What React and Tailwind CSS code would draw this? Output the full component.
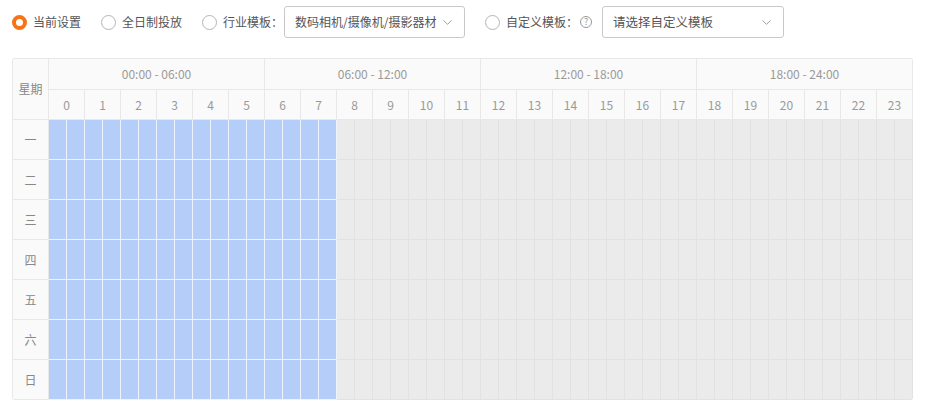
import React from 'react';
import { ChevronDown } from 'lucide-react';

const font = { fontFamily: '"Noto Sans CJK SC", "Noto Sans", sans-serif' };

const ranges = ['00:00 - 06:00', '06:00 - 12:00', '12:00 - 18:00', '18:00 - 24:00'];
const days = ['一', '二', '三', '四', '五', '六', '日'];
const hours = Array.from({ length: 24 }, (_, i) => i);
const halves = Array.from({ length: 48 }, (_, i) => i);

function Radio({ checked, label }) {
  return (
    <label className="flex items-center gap-[6px] text-[12px] text-[#555] whitespace-nowrap cursor-pointer">
      {checked ? (
        <span className="w-[15px] h-[15px] rounded-full border-[4px] border-[#f97316] bg-white" />
      ) : (
        <span className="w-[15px] h-[15px] rounded-full border border-[#b5b5b5] bg-white" />
      )}
      {label}
    </label>
  );
}

function Select({ value, width, size }) {
  return (
    <div
      className={`${width} ${size} h-[32px] shrink-0 border border-[#c9c9c9] rounded-[3px] flex items-center justify-between pl-[10px] pr-[9px] text-[#555] bg-white whitespace-nowrap`}
    >
      <span>{value}</span>
      <ChevronDown className="w-[15px] h-[15px] text-[#888] shrink-0" strokeWidth={1.3} />
    </div>
  );
}

export default function App() {
  return (
    <div className="w-[935px] h-[409px] bg-white px-[12px] pt-[6px]" style={font}>
      {/* options */}
      <div className="flex items-center h-[32px]">
        <Radio checked label="当前设置" />
        <div className="w-[20px] shrink-0" />
        <Radio label="全日制投放" />
        <div className="w-[20px] shrink-0" />
        <Radio label="行业模板：" />
        <div className="w-[1px] shrink-0" />
        <Select value="数码相机/摄像机/摄影器材" width="w-[181px]" size="text-[12px]" />
        <div className="w-[20px] shrink-0" />
        <Radio label="自定义模板：" />
        <span className="ml-[2px] w-[12px] h-[12px] shrink-0 rounded-full border border-[#999] text-[#999] text-[9px] leading-[10px] flex items-center justify-center">
          ?
        </span>
        <div className="w-[10px] shrink-0" />
        <Select value="请选择自定义模板" width="w-[182px]" size="text-[12.5px]" />
      </div>

      {/* schedule table */}
      <div className="mt-[20px] w-[901px] grid grid-cols-[36px_repeat(48,18px)] border-l border-t border-[#e8e8e8] rounded-[3px] overflow-hidden text-[12px] text-[#999]">
        <div className="row-span-2 col-span-1 flex items-center justify-center bg-[#fafafa] border-r border-b border-[#e8e8e8] text-[12px] text-[#888]">
          星期
        </div>
        {ranges.map((r) => (
          <div
            key={r}
            className="col-span-12 h-[31px] flex items-center justify-center bg-[#fafafa] border-r border-b border-[#e8e8e8]"
          >
            {r}
          </div>
        ))}
        {hours.map((h) => (
          <div
            key={h}
            className="col-span-2 h-[30px] flex items-center justify-center bg-[#fafafa] border-r border-b border-[#e8e8e8]"
          >
            {h}
          </div>
        ))}
        {days.map((d) => (
          <React.Fragment key={d}>
            <div className="h-[40px] flex items-center justify-center bg-[#fafafa] border-r border-b border-[#e8e8e8] text-[12px] text-[#888]">
              {d}
            </div>
            {halves.map((i) =>
              i < 16 ? (
                <div key={i} className="h-[40px] bg-[#b4cdf9] border-r border-b border-[#eef3fd]" />
              ) : (
                <div key={i} className="h-[40px] bg-[#ebebeb] border-r border-b border-[#e2e2e2]" />
              )
            )}
          </React.Fragment>
        ))}
      </div>
    </div>
  );
}
